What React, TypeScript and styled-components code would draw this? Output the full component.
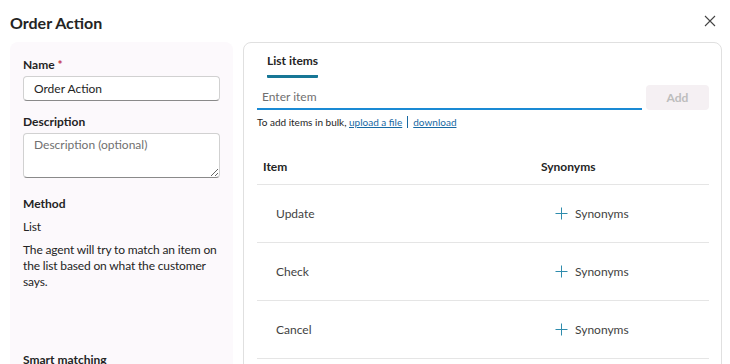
import React from "react"
import styled, { createGlobalStyle } from "styled-components"

const GlobalStyle = createGlobalStyle`
  body {
    margin: 0;
    background: #ffffff;
    font-family: Lato, "Open Sans", sans-serif;
    color: #242424;
  }
`

const items = ["Update", "Check", "Cancel"]

const PlusIcon: React.FC = () => (
  <svg width="13" height="13" viewBox="0 0 13 13" fill="none">
    <path d="M6.5 0.5v12M0.5 6.5h12" stroke="#2f8cad" strokeWidth="1" />
  </svg>
)

const CloseIcon: React.FC = () => (
  <svg width="12" height="12" viewBox="0 0 12 12" fill="none">
    <path d="M1 1l10 10M11 1L1 11" stroke="#444" strokeWidth="1.1" />
  </svg>
)

export default function App() {
  return (
    <>
      <GlobalStyle />
      <S.Dialog>
        <S.Header>
          <S.Title>Order Action</S.Title>
          <S.Close aria-label="Close">
            <CloseIcon />
          </S.Close>
        </S.Header>
        <S.Body>
          <S.Side>
            <S.Label>
              Name <S.Required>*</S.Required>
            </S.Label>
            <S.TextInput defaultValue="Order Action" />
            <S.Label $top={13}>Description</S.Label>
            <S.TextArea placeholder="Description (optional)" />
            <S.Label $top={18}>Method</S.Label>
            <S.Text>List</S.Text>
            <S.Text>The agent will try to match an item on the list based on what the customer says.</S.Text>
            <S.Label $top={62}>Smart matching</S.Label>
          </S.Side>
          <S.Card>
            <S.Tabs>
              <S.Tab>List items</S.Tab>
            </S.Tabs>
            <S.AddRow>
              <S.ItemInput placeholder="Enter item" />
              <S.AddButton disabled>Add</S.AddButton>
            </S.AddRow>
            <S.Hint>
              To add items in bulk, <S.Link>upload a file</S.Link>
              <S.Sep />
              <S.Link>download</S.Link>
            </S.Hint>
            <S.Table>
              <S.HeadRow>
                <S.HeadCell>Item</S.HeadCell>
                <S.HeadCell>Synonyms</S.HeadCell>
              </S.HeadRow>
              {items.map((item) => (
                <S.Row key={item}>
                  <S.ItemCell>{item}</S.ItemCell>
                  <S.SynCell>
                    <S.SynButton>
                      <PlusIcon />
                      Synonyms
                    </S.SynButton>
                  </S.SynCell>
                </S.Row>
              ))}
            </S.Table>
          </S.Card>
        </S.Body>
      </S.Dialog>
    </>
  )
}

const S = {
  Dialog: styled.div`
    height: 364px;
    overflow: hidden;
    padding: 0 8px 0 10px;
    box-sizing: border-box;
  `,
  Header: styled.div`
    display: flex;
    align-items: center;
    justify-content: space-between;
    height: 42px;
  `,
  Title: styled.h1`
    margin: 0;
    font-size: 16px;
    font-weight: 700;
    color: #242424;
    position: relative;
    top: 1px;
  `,
  Close: styled.button`
    border: 0;
    background: none;
    padding: 0;
    width: 16px;
    height: 16px;
    display: flex;
    align-items: center;
    justify-content: center;
    margin-right: 4px;
  `,
  Body: styled.div`
    display: grid;
    grid-template-columns: 223px 1fr;
    gap: 10px;
  `,
  Side: styled.div`
    background: #fcf9fc;
    border-radius: 8px;
    padding: 15px 13px 0 13px;
    height: 340px;
    box-sizing: border-box;
  `,
  Label: styled.div<{ $top?: number }>`
    font-size: 12px;
    font-weight: 700;
    line-height: 16px;
    margin-top: ${(p) => p.$top ?? 0}px;
    margin-bottom: 3px;
  `,
  Required: styled.span`
    color: #c4314b;
  `,
  TextInput: styled.input`
    display: block;
    width: 100%;
    box-sizing: border-box;
    height: 25px;
    border: 1px solid #d1d1d1;
    border-bottom-color: #8a8a8a;
    border-radius: 4px;
    padding: 0 10px;
    font-family: inherit;
    font-size: 12px;
    color: #242424;
    background: #fff;
    outline: none;
  `,
  TextArea: styled.textarea`
    display: block;
    width: 100%;
    box-sizing: border-box;
    height: 45px;
    border: 1px solid #d1d1d1;
    border-bottom-color: #8a8a8a;
    border-radius: 4px;
    padding: 3px 10px;
    font-family: inherit;
    font-size: 12px;
    background: #fff;
    resize: vertical;
    outline: none;
    &::placeholder {
      color: #707070;
    }
  `,
  Text: styled.p`
    margin: 7px 0 0;
    font-size: 12px;
    line-height: 16px;
    letter-spacing: -0.15px;
    color: #242424;
  `,
  Card: styled.div`
    border: 1px solid #e0e0e0;
    border-radius: 8px;
    padding: 0 12px 0 13px;
    height: 340px;
    box-sizing: border-box;
    background: #fff;
  `,
  Tabs: styled.div`
    display: flex;
    padding: 10px 0 0 10px;
  `,
  Tab: styled.div`
    font-size: 12px;
    font-weight: 700;
    line-height: 16px;
    padding-bottom: 6px;
    border-bottom: 3px solid #177796;
    border-radius: 0 0 1px 1px;
  `,
  AddRow: styled.div`
    display: flex;
    align-items: flex-end;
    gap: 4px;
    margin-top: 7px;
  `,
  ItemInput: styled.input`
    flex: 1;
    height: 25px;
    box-sizing: border-box;
    border: 0;
    border-bottom: 2px solid #1a8ad4;
    padding: 0 5px;
    font-family: inherit;
    font-size: 12px;
    outline: none;
    &::placeholder {
      color: #707070;
    }
  `,
  AddButton: styled.button`
    width: 63px;
    height: 25px;
    border: 0;
    border-radius: 4px;
    background: #f5f0f3;
    color: #bdbdbd;
    font-family: inherit;
    font-size: 12px;
    font-weight: 700;
  `,
  Hint: styled.div`
    display: flex;
    align-items: center;
    font-size: 10px;
    margin-top: 6px;
    color: #242424;
    white-space: pre;
  `,
  Link: styled.span`
    color: #1769a3;
    text-decoration: underline;
  `,
  Sep: styled.span`
    width: 1px;
    height: 12px;
    background: #1769a3;
    margin: 0 5px;
  `,
  Table: styled.div`
    margin-top: 21px;
  `,
  HeadRow: styled.div`
    display: grid;
    grid-template-columns: 284px 1fr;
    height: 35px;
    align-items: center;
    border-bottom: 1px solid #e5e5e5;
  `,
  HeadCell: styled.div`
    font-size: 12px;
    font-weight: 700;
    padding-left: 6px;
    &:last-child {
      padding-left: 0;
    }
  `,
  Row: styled.div`
    display: grid;
    grid-template-columns: 284px 1fr;
    height: 58px;
    box-sizing: border-box;
    align-items: center;
    border-bottom: 1px solid #e5e5e5;
  `,
  ItemCell: styled.div`
    font-size: 12px;
    color: #424242;
    padding-left: 19px;
  `,
  SynCell: styled.div`
    padding-left: 14px;
  `,
  SynButton: styled.button`
    display: flex;
    align-items: center;
    gap: 7px;
    border: 0;
    background: none;
    padding: 0;
    font-family: inherit;
    font-size: 12px;
    color: #424242;
  `,
}
